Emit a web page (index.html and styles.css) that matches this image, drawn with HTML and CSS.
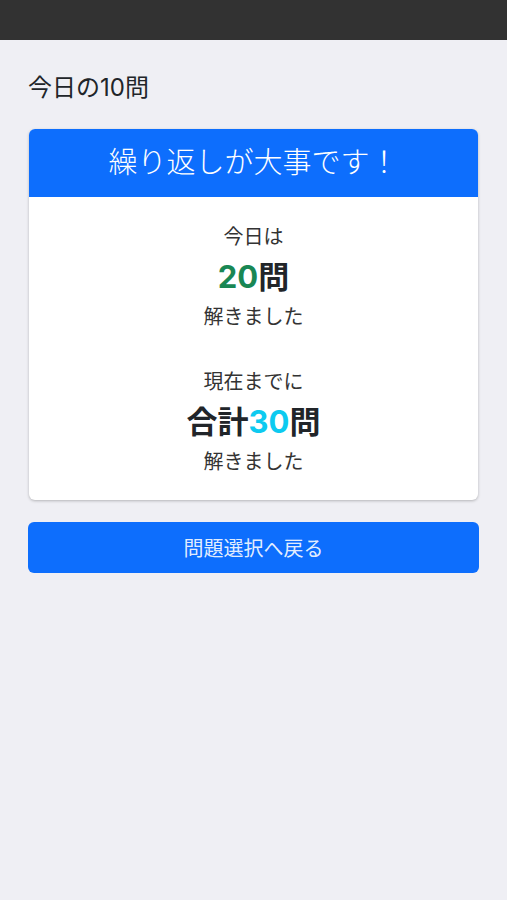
FILE: index.html
```html
<!DOCTYPE html>
<html lang="ja">
<head>
<meta charset="utf-8">
<title>今日の10問</title>
<link rel="stylesheet" href="styles.css">
</head>
<body>
<div class="topbar"></div>
<main class="content">
  <h1 class="title">今日の10問</h1>
  <section class="card">
    <div class="card-header">繰り返しが大事です！</div>
    <div class="card-body">
      <div class="group">
        <p class="label">今日は</p>
        <p class="big"><span class="green">20</span>問</p>
        <p class="label">解きました</p>
      </div>
      <div class="group">
        <p class="label">現在までに</p>
        <p class="big">合計<span class="cyan">30</span>問</p>
        <p class="label">解きました</p>
      </div>
    </div>
  </section>
  <button class="back">問題選択へ戻る</button>
</main>
</body>
</html>
```
FILE: styles.css
```css
* { box-sizing: border-box; }
html, body { margin: 0; padding: 0; }
body {
  background: #efeff4;
  font-family: "Inter", "Noto Sans CJK JP", "Noto Sans", sans-serif;
  color: #212529;
  min-height: 900px;
}
.topbar {
  height: 40px;
  background: #323232;
}
.content {
  padding: 33px 28px 0 28px;
}
.title {
  margin: 0;
  font-size: 24px;
  font-weight: 400;
  line-height: 30px;
  color: #212529;
}
.card {
  margin: 26px 1px 0 1px;
  background: #fff;
  border-radius: 6px;
  overflow: hidden;
  box-shadow: 0 1px 3px rgba(0,0,0,0.25);
}
.card-header {
  height: 68px;
  background: #0d6efd;
  color: #fff;
  font-size: 29px;
  font-weight: 300;
  line-height: 68px;
  text-align: center;
}
.card-body {
  padding: 20px 0 18px;
  display: flex;
  flex-direction: column;
  gap: 25px;
  text-align: center;
}
.group p { margin: 0; line-height: 40px; }
.label { font-size: 20px; color: #333; }
.big { font-size: 31px; font-weight: 700; color: #212529; }
.green { color: #198754; }
.cyan { color: #0dcaf0; }
.back {
  display: block;
  width: 100%;
  margin-top: 22px;
  height: 51px;
  border: none;
  border-radius: 6px;
  background: #0d6efd;
  color: rgba(255,255,255,0.9);
  font-family: "Noto Sans CJK JP", "Noto Sans", sans-serif;
  font-size: 20px;
}
```
